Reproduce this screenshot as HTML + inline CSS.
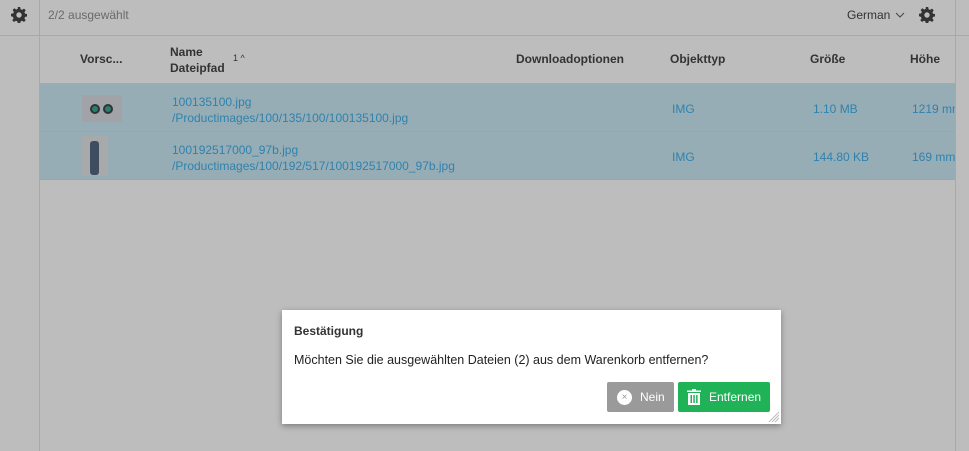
<!DOCTYPE html>
<html><head><meta charset="utf-8"><style>
*{box-sizing:border-box;margin:0;padding:0}
body{width:969px;height:451px;background:#bdbdbd;font-family:"Liberation Sans",sans-serif;position:relative;overflow:hidden;font-size:12px}
.a{position:absolute;white-space:nowrap}
.vl{position:absolute;width:1px;background:#a8a8a8}
.hl{position:absolute;height:1px;background:#a8a8a8}
.h{font-weight:bold;color:#333;font-size:12px}
.b{color:#2f82ad}
.row{position:absolute;left:40px;width:915px;height:48px;background:#97adb6;border-bottom:1px solid #a3a3a3}
</style></head><body>
<div class="vl" style="left:39px;top:0;height:451px"></div>
<div class="vl" style="left:955px;top:0;height:451px"></div>
<div class="hl" style="left:0;top:35px;width:969px"></div>
<svg class="a" style="left:11px;top:7px" width="16" height="16" viewBox="0 0 16 16"><path fill="#333" d="M6.8 0h2.4l.4 2.2 1.5.7 1.9-1.3 1.7 1.7-1.3 1.9.7 1.5 2.2.4v2.4l-2.2.4-.7 1.5 1.3 1.9-1.7 1.7-1.9-1.3-1.5.7-.4 2.2H6.8l-.4-2.2-1.5-.7-1.9 1.3-1.7-1.7 1.3-1.9-.7-1.5L0 9.2V6.8l2.2-.4.7-1.5-1.3-1.9 1.7-1.7 1.9 1.3 1.5-.7zM8 5.3A2.7 2.7 0 1 0 8 10.7 2.7 2.7 0 1 0 8 5.3z"/></svg>
<div class="a" style="left:48px;top:8px;color:#6a6a6a">2/2 ausgewählt</div>
<div class="a" style="left:847px;top:8px;color:#333">German</div>
<svg class="a" style="left:895px;top:12px" width="10" height="7"><path d="M1 1l4 4 4-4" stroke="#444" fill="none"/></svg>
<svg class="a" style="left:919px;top:7px" width="16" height="16" viewBox="0 0 16 16"><path fill="#333" d="M6.8 0h2.4l.4 2.2 1.5.7 1.9-1.3 1.7 1.7-1.3 1.9.7 1.5 2.2.4v2.4l-2.2.4-.7 1.5 1.3 1.9-1.7 1.7-1.9-1.3-1.5.7-.4 2.2H6.8l-.4-2.2-1.5-.7-1.9 1.3-1.7-1.7 1.3-1.9-.7-1.5L0 9.2V6.8l2.2-.4.7-1.5-1.3-1.9 1.7-1.7 1.9 1.3 1.5-.7zM8 5.3A2.7 2.7 0 1 0 8 10.7 2.7 2.7 0 1 0 8 5.3z"/></svg>
<div class="a h" style="left:80px;top:52px">Vorsc...</div>
<div class="a h" style="left:170px;top:44px;line-height:16px">Name<br>Dateipfad</div>
<div class="a" style="left:233px;top:53px;font-size:9px;color:#333">1 ^</div>
<div class="a h" style="left:516px;top:52px">Downloadoptionen</div>
<div class="a h" style="left:670px;top:52px">Objekttyp</div>
<div class="a h" style="left:810px;top:52px">Größe</div>
<div class="a h" style="left:910px;top:52px">Höhe</div>
<div class="hl" style="left:40px;top:83px;width:915px"></div>
<div class="row" style="top:84px"></div>
<div class="row" style="top:132px"></div>
<div class="a" style="left:82px;top:95px;width:40px;height:27px;background:#a1a3a8"><div class="a" style="left:8px;top:9px;width:10px;height:10px;border-radius:50%;background:#2b7d72;border:2px solid #333"></div><div class="a" style="left:21px;top:9px;width:10px;height:10px;border-radius:50%;background:#2b7d72;border:2px solid #333"></div></div>
<div class="a" style="left:82px;top:136px;width:26px;height:40px;background:#a8a9ab"><div class="a" style="left:8px;top:5px;width:9px;height:34px;background:#3e4e60;border-radius:3px"></div></div>
<div class="a b" style="left:172px;top:94px;line-height:16px">100135100.jpg<br>/Productimages/100/135/100/100135100.jpg</div>
<div class="a b" style="left:172px;top:142px;line-height:16px">100192517000_97b.jpg<br>/Productimages/100/192/517/100192517000_97b.jpg</div>
<div class="a b" style="left:672px;top:102px">IMG</div>
<div class="a b" style="left:672px;top:150px">IMG</div>
<div class="a b" style="left:813px;top:102px">1.10 MB</div>
<div class="a b" style="left:813px;top:150px">144.80 KB</div>
<div class="a b" style="left:912px;top:102px;width:43px;overflow:hidden">1219 mm</div>
<div class="a b" style="left:912px;top:150px;width:43px;overflow:hidden">169 mm</div>
<div class="a" style="left:282px;top:310px;width:499px;height:114px;background:#fff;box-shadow:0 2px 6px rgba(0,0,0,.35)">
<div class="a" style="left:12px;top:14px;font-weight:bold;color:#333">Bestätigung</div>
<div class="a" style="left:12px;top:43px;color:#222;font-size:12.5px">Möchten Sie die ausgewählten Dateien (2) aus dem Warenkorb entfernen?</div>
<div class="a" style="left:325px;top:72px;width:67px;height:30px;background:#9a9a9a;border-radius:2px;color:#fff"><div class="a" style="left:10px;top:8px;width:15px;height:15px;border-radius:50%;background:#fff;color:#9a9a9a;font-size:10px;text-align:center;line-height:15px">×</div><div class="a" style="left:33px;top:8px">Nein</div></div>
<div class="a" style="left:396px;top:72px;width:92px;height:30px;background:#1fb257;border-radius:2px;color:#fff"><svg class="a" style="left:9px;top:7px" width="14" height="16" viewBox="0 0 14 16"><path fill="#fff" d="M5 0h4v1.5h5V3H0V1.5h5zM1 4h12v12H1zM3.5 6v8h1.5V6zm2.8 0v8h1.5V6zm2.8 0v8h1.5V6z"/></svg><div class="a" style="left:31px;top:8px">Entfernen</div></div>
<svg class="a" style="left:485px;top:100px" width="13" height="13"><path d="M12 2L2 12M12 5L5 12M12 8L8 12" stroke="#bbb" stroke-width="1"/></svg>
</div>
</body></html>
